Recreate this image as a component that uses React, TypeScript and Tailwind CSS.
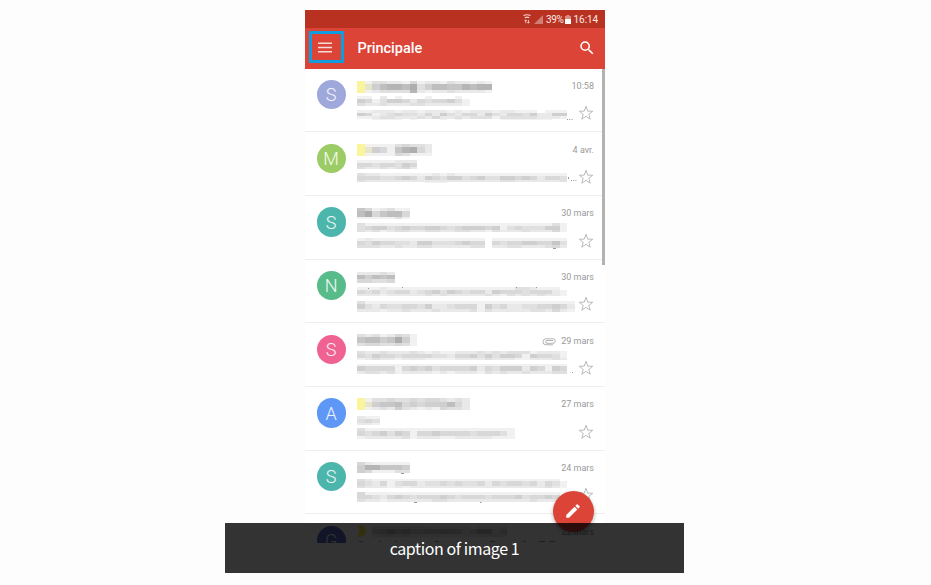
import React from "react";

type Line = [y: number, height: number, cells: string];

interface Mail {
  letter: string;
  color: string;
  date: string;
  clip?: boolean;
  lines: Line[];
  dots?: [number, number, number][];
}

// Width of one mosaic cell in the masked message previews.
const CELL = 7.5;

const mails: Mail[] = [
  {
    letter: "S", color: "bg-[#9fa8da]", date: "10:58",
    lines: [
      [12, 3, "y13322141221322121"],
      [15, 6, "yw5788793577668788"],
      [21, 3, "y12333382122322221"],
      [27, 3, "110201000100010"],
      [30, 4, "541355424344531"],
      [34, 3, "322322233222221"],
      [41, 3, "1122212212221212221221110111"],
      [44, 3, "5412343324253244253244352255"],
      [47, 3, "1123322232422323331333332221"],
      [50, 1, "0011110100010100000111111100"],
    ],
    dots: [[210, 50, 1], [212.2, 50, 1], [214.4, 50, 1]],
  },
  {
    letter: "M", color: "bg-[#9ccc65]", date: "4 avr.",
    lines: [
      [12, 3, "y111134332"],
      [15, 6, "yw54168942"],
      [21, 3, "y111143111"],
      [28, 3, "11111222"],
      [31, 4, "44344354"],
      [35, 2, "32232342"],
      [41, 3, "3221111111212111111111111111"],
      [44, 4, "4443345425435534533554542443"],
      [48, 2, "3222222222222222222332222223"],
      [50, 1, "0000000001110000000000000000"],
    ],
    dots: [[211, 45, 1], [211, 46, 1], [214, 48, 1], [216.2, 48, 1], [218.4, 48, 1]],
  },
  {
    letter: "S", color: "bg-[#4db6ac]", date: "30 mars",
    lines: [
      [12, 3, "6412311"],
      [15, 6, "7946774"],
      [21, 2, "1111131"],
      [27, 3, "3111111111111111111111111131"],
      [30, 4, "3455345445543455545134333551"],
      [34, 2, "3231233223322332213222322241"],
      [42, 3, "1211111111111111101111111111"],
      [45, 4, "4354433255333454404344554463"],
      [49, 3, "3332232233222223302233222342"],
    ],
    dots: [[196, 52, 3]],
  },
  {
    letter: "N", color: "bg-[#57bb8a]", date: "30 mars",
    lines: [
      [12, 3, "22232"],
      [15, 4, "75767"],
      [19, 4, "44334"],
      [27, 3, "1112111111111111111113321110"],
      [30, 4, "4342344234535434425444344421"],
      [34, 2, "2221222223232222232132323221"],
      [41, 3, "31111111111111111111111111111"],
      [44, 5, "53243344352234441534223344542"],
      [49, 3, "22212232223222231322222332421"],
    ],
    dots: [[11, 28, 1], [45, 27, 1], [159, 27, 1], [179, 27, 1]],
  },
  {
    letter: "S", color: "bg-[#f06292]", date: "29 mars", clip: true,
    lines: [
      [11, 3, "32312431"],
      [14, 6, "67756951"],
      [20, 3, "34433431"],
      [28, 3, "3223222321211222323233312221"],
      [31, 4, "4354434444332445353554154431"],
      [35, 2, "1232212221111222232221122232"],
      [41, 2, "1111111111111111111111111111"],
      [43, 5, "5444414545344445243555254154"],
      [48, 3, "2332312222121222132322322233"],
    ],
    dots: [[215, 49, 1]],
  },
  {
    letter: "A", color: "bg-[#5e97f6]", date: "27 mars",
    lines: [
      [11, 4, "y13343343443232"],
      [15, 5, "yw5667454555742"],
      [20, 3, "y12325321214332"],
      [29, 3, "211"],
      [32, 4, "343"],
      [36, 2, "221"],
      [41, 3, "311111111111111111111"],
      [44, 5, "434535414454444344431"],
      [49, 3, "122222312221122222111"],
    ],
  },
  {
    letter: "S", color: "bg-[#4db6ac]", date: "24 mars",
    lines: [
      [11, 3, "4211111"],
      [14, 5, "5886665"],
      [19, 3, "5411133"],
      [28, 2, "3211111111111111111111111110"],
      [30, 5, "4324134423343433424344342431"],
      [35, 2, "3222121222222222222222222321"],
      [41, 3, "411111111111111111111111111"],
      [44, 4, "443245434445434443444534454"],
      [48, 3, "322122222233222222222223222"],
    ],
    dots: [[44, 22, 3], [57, 51, 3], [123, 51, 1.5]],
  },
  {
    letter: "G", color: "bg-[#5c6bc0]", date: "22 mars",
    lines: [
      [12, 3, "00222322211111101111"],
      [15, 5, "00568675566765247725"],
      [20, 3, "00233231212111112232"],
    ],
    dots: [[2, 27, 4], [22, 27, 2], [38, 27, 2], [78, 27, 4], [100, 27, 2], [133, 27, 5], [166, 27, 3], [182, 27, 6], [192, 27, 6]],
  },
];

function shade(code: string) {
  if (code === "y") return "#faf49c";
  if (code === "w") return "#e6e4cb";
  const value = 250 - parseInt(code, 16) * 8.6;
  return `rgb(${value},${value},${value})`;
}

function Preview({ mail }: { mail: Mail }) {
  return (
    <svg width="224" height="60" viewBox="0 0 224 60" className="block shrink-0" aria-hidden="true">
      {mail.lines.map(([y, height, cells]) =>
        cells.split("").map((code, i) =>
          code === "0" ? null : (
            <rect key={`${y}-${i}`} x={i * CELL} y={y} width={CELL} height={height} fill={shade(code)} shapeRendering="crispEdges" />
          ),
        ),
      )}
      {mail.dots?.map(([x, y, width]) => (
        <rect key={`d${x}-${y}`} x={x} y={y} width={width} height="1" fill="#999" />
      ))}
      {mail.letter === "G" && <path d="M.5 11.5h6l3 5.5-3 5.5h-6l2-5.5z" fill="#f4e842" />}
    </svg>
  );
}

function Star() {
  return (
    <svg width="16" height="16" viewBox="0 0 16 16" fill="none" stroke="#b5b5b5" strokeWidth="0.95">
      <path d="M8 1.3 9.75 6.1 14.7 6.25 10.8 9.3 12.2 14.2 8 11.35 3.8 14.2 5.2 9.3 1.3 6.25 6.25 6.1Z" />
    </svg>
  );
}

function Clip() {
  return (
    <svg width="14" height="8" viewBox="0 0 14 8" fill="none" stroke="#aaa" strokeWidth="0.9">
      <path d="M11 6.8H4a3 3 0 0 1 0-6h7a2.2 2.2 0 0 1 0 4.5H5a1.4 1.4 0 0 1 0-2.8h6" />
    </svg>
  );
}

function MailRow({ mail }: { mail: Mail }) {
  return (
    <div className="flex h-[63.7px] shrink-0 border-b border-[#eeeeee] pl-[11.5px]">
      <div className={`mt-[11.5px] flex h-[29.3px] w-[29.3px] shrink-0 items-center justify-center rounded-full text-[18px] font-light text-white/90 ${mail.color}`}>
        {mail.letter}
      </div>
      <div className="ml-[11.2px] w-[221px] shrink-0">
        <Preview mail={mail} />
      </div>
      <div className="-ml-10 flex w-[56px] shrink-0 flex-col items-end pt-[12.3px]">
        <div className="flex h-[12px] items-center gap-[5px] whitespace-nowrap text-[9px] text-[#999]">
          {mail.clip && <Clip />}
          <span>{mail.date}</span>
        </div>
        <div className="mt-[12.4px]">
          <Star />
        </div>
      </div>
    </div>
  );
}

function StatusBar() {
  return (
    <div className="flex h-[17.5px] shrink-0 items-center justify-end bg-[#b93221] pr-[7px] pt-px text-[10px] text-[#fbe9e7]">
      <svg width="8" height="10" viewBox="0 0 8 10" fill="none" stroke="#f3d3cf" strokeWidth="1.1">
        <path d="M.5 1.6Q4-.2 7.5 1.6M1.7 3.9Q4 2.4 6.3 3.9" />
        <path d="M2.7 9.2V6M1.6 7l1.1-1.2L3.8 7M5.4 6v3.2M4.4 8l1 1.2L6.5 8" strokeWidth=".9" />
      </svg>
      <svg width="9" height="9" viewBox="0 0 9 9" className="ml-[3px]">
        <path d="M0 9 9 0v9z" fill="#d17d73" />
      </svg>
      <span className="ml-[3.5px] w-[18.5px] tracking-[-0.4px]">39%</span>
      <svg width="6" height="9" viewBox="0 0 6 9">
        <path d="M1.5 0h3v1H6v3H0V1h1.5z" fill="#d78d84" />
        <path d="M0 4h6v5H0z" fill="#fff" />
      </svg>
      <span className="ml-[3px] tracking-[-0.1px]">16:14</span>
    </div>
  );
}

function AppBar() {
  return (
    <div className="flex h-[41px] shrink-0 items-center bg-[#db4437] pl-1 pr-[9px]">
      <div className="-mt-[1.5px] flex h-[32px] w-[35px] items-center justify-center border-3 border-[#129ce0]">
        <svg width="14" height="11" viewBox="0 0 14 11" fill="#f8dcd9" className="-ml-[2.5px]">
          <path d="M0 .5h14v1.5H0zM0 4.8h14v1.5H0zM0 9.1h14v1.5H0z" />
        </svg>
      </div>
      <div className="ml-[13.4px] flex-1 pt-[1.5px] text-[14.5px] font-medium text-white">Principale</div>
      <svg width="18" height="18" viewBox="0 0 24 24" fill="#fff" className="-mt-px">
        <path d="M15.5 14h-.79l-.28-.27A6.47 6.47 0 0 0 16 9.5 6.5 6.5 0 1 0 9.5 16c1.61 0 3.09-.59 4.23-1.57l.27.28v.79l5 4.99L20.49 19zm-6 0C7.01 14 5 11.99 5 9.5S7.01 5 9.5 5 14 7.01 14 9.5 11.99 14 9.5 14" />
      </svg>
    </div>
  );
}

export default function App() {
  return (
    <div className="relative h-[585px] w-[931px] overflow-hidden bg-[#fdfdfd] pt-[10px] font-[Roboto,sans-serif]">
      <div className="relative ml-[305px] flex h-[533px] w-[300px] flex-col overflow-hidden bg-white">
        <StatusBar />
        <AppBar />
        <div className="relative flex min-h-0 flex-1 flex-col overflow-hidden">
          {mails.map((mail, i) => (
            <MailRow key={i} mail={mail} />
          ))}
          <div className="absolute right-0 top-0 h-[196.5px] w-[3px] bg-[#b2b2b2]" />
        </div>
        <div className="absolute bottom-[11.5px] right-[11.5px] flex h-[41px] w-[41px] items-center justify-center rounded-full bg-[#db4437] shadow-[0_2px_4px_rgba(0,0,0,0.3)]">
          <svg width="18" height="18" viewBox="0 0 24 24" fill="#fff">
            <path d="M3 17.25V21h3.75L17.81 9.94l-3.75-3.75zM20.71 7.04a1 1 0 0 0 0-1.41l-2.34-2.34a1 1 0 0 0-1.41 0l-1.83 1.83 3.75 3.75z" />
          </svg>
        </div>
      </div>
      <div className="absolute left-[225px] top-[523px] flex h-[50px] w-[459px] items-center justify-center bg-black/80 pb-px font-['Noto_Sans_CJK_SC',sans-serif] text-[16px] tracking-[-0.4px] text-white">
        caption of image 1
      </div>
    </div>
  );
}
